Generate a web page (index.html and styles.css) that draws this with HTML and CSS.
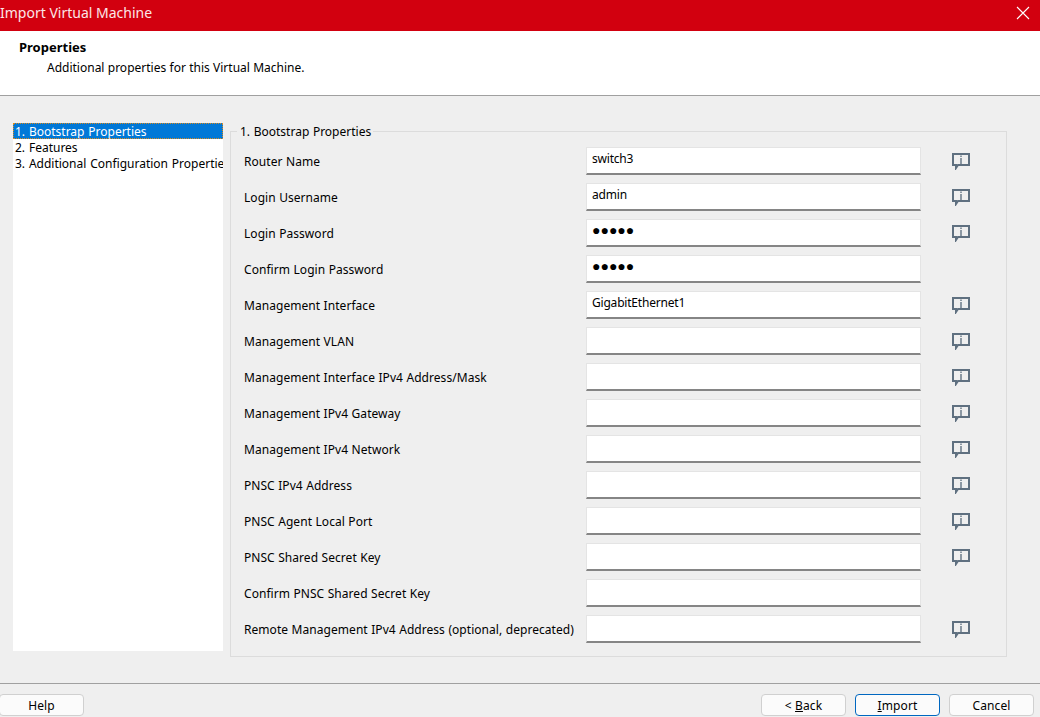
FILE: index.html
```html
<!DOCTYPE html>
<html lang="en">
<head>
<meta charset="utf-8">
<title>Import Virtual Machine</title>
<link rel="stylesheet" href="styles.css">
</head>
<body>
<div class="dialog">
  <header class="titlebar">
    <span class="title">Import Virtual Machine</span>
    <svg class="close" width="14" height="14" viewBox="0 0 14 14"><path d="M1 1L13 13M13 1L1 13" stroke="#fff" stroke-width="1.1" fill="none"/></svg>
  </header>
  <section class="banner">
    <div class="banner-title">Properties</div>
    <div class="banner-sub">Additional properties for this Virtual Machine.</div>
  </section>
  <main class="content">
    <ul class="steps">
      <li class="step selected">1. Bootstrap Properties</li>
      <li class="step">2. Features</li>
      <li class="step">3. Additional Configuration Properties</li>
    </ul>
    <fieldset class="group">
      <legend class="group-title">1. Bootstrap Properties</legend>
      <div class="row"><label class="label">Router Name</label><div class="field">switch3</div><svg class="info" width="18" height="18" viewBox="0 0 18 18"><use href="#bubble"/></svg></div>
      <div class="row"><label class="label">Login Username</label><div class="field">admin</div><svg class="info" width="18" height="18" viewBox="0 0 18 18"><use href="#bubble"/></svg></div>
      <div class="row"><label class="label">Login Password</label><div class="field dots">●●●●●</div><svg class="info" width="18" height="18" viewBox="0 0 18 18"><use href="#bubble"/></svg></div>
      <div class="row"><label class="label">Confirm Login Password</label><div class="field dots">●●●●●</div></div>
      <div class="row"><label class="label">Management Interface</label><div class="field">GigabitEthernet1</div><svg class="info" width="18" height="18" viewBox="0 0 18 18"><use href="#bubble"/></svg></div>
      <div class="row"><label class="label">Management VLAN</label><div class="field"></div><svg class="info" width="18" height="18" viewBox="0 0 18 18"><use href="#bubble"/></svg></div>
      <div class="row"><label class="label">Management Interface IPv4 Address/Mask</label><div class="field"></div><svg class="info" width="18" height="18" viewBox="0 0 18 18"><use href="#bubble"/></svg></div>
      <div class="row"><label class="label">Management IPv4 Gateway</label><div class="field"></div><svg class="info" width="18" height="18" viewBox="0 0 18 18"><use href="#bubble"/></svg></div>
      <div class="row"><label class="label">Management IPv4 Network</label><div class="field"></div><svg class="info" width="18" height="18" viewBox="0 0 18 18"><use href="#bubble"/></svg></div>
      <div class="row"><label class="label">PNSC IPv4 Address</label><div class="field"></div><svg class="info" width="18" height="18" viewBox="0 0 18 18"><use href="#bubble"/></svg></div>
      <div class="row"><label class="label">PNSC Agent Local Port</label><div class="field"></div><svg class="info" width="18" height="18" viewBox="0 0 18 18"><use href="#bubble"/></svg></div>
      <div class="row"><label class="label">PNSC Shared Secret Key</label><div class="field"></div><svg class="info" width="18" height="18" viewBox="0 0 18 18"><use href="#bubble"/></svg></div>
      <div class="row"><label class="label">Confirm PNSC Shared Secret Key</label><div class="field"></div></div>
      <div class="row"><label class="label">Remote Management IPv4 Address (optional, deprecated)</label><div class="field"></div><svg class="info" width="18" height="18" viewBox="0 0 18 18"><use href="#bubble"/></svg></div>
    </fieldset>
  </main>
  <footer class="actions">
    <button class="btn btn-help">Help</button>
    <div class="actions-right">
      <button class="btn">&lt; <u>B</u>ack</button>
      <button class="btn btn-default"><u>I</u>mport</button>
      <button class="btn">Cancel</button>
    </div>
  </footer>
</div>
<svg class="defs" width="0" height="0">
  <defs>
    <g id="bubble">
      <path d="M1 2H17V13H6L4 16V13H1Z" fill="none" stroke="#5f7080" stroke-width="2"/>
      <path d="M8 3.5H10V5H8ZM8 6H10V12H8Z" fill="#8c98a3"/>
    </g>
  </defs>
</svg>
</body>
</html>
```

FILE: styles.css
```css
* { box-sizing: border-box; }
html, body { margin: 0; padding: 0; height: 100%; overflow: hidden; }
body { font: 12px/16px "Noto Sans", "Open Sans", sans-serif; color: #000; background: #efefef; }
.dialog { display: flex; flex-direction: column; height: 717px; width: 1040px; }
.titlebar { height: 31px; flex: none; background: #d2000f; color: #fbe6e7; display: flex; align-items: center; justify-content: space-between; padding: 0 10px 0 0; }
.title { font-size: 14px; margin-top: -6px; }
.close { margin-top: -5px; }
.banner { height: 65px; flex: none; background: #fff; border-bottom: 1px solid #a0a0a0; padding: 8px 0 0 19px; }
.banner-title { font-weight: 700; font-size: 13px; }
.banner-sub { margin: 5px 0 0 28px; word-spacing: .2px; }
.content { flex: 1; display: flex; align-items: flex-start; padding: 27px 33px 0 13px; gap: 7px; }
.steps { list-style: none; margin: 0; padding: 0; width: 210px; height: 528px; background: #fff; overflow: hidden; flex: none; word-spacing: .7px; }
.step { height: 16px; line-height: 18px; padding-left: 2px; white-space: nowrap; overflow: hidden; }
.selected { background: #0078d7; color: #fff; outline: 1px dotted #d98a1f; outline-offset: -1px; }
.group { flex: 1; margin: 0; height: 534px; padding: 8px 0 0 13px; border: 1px solid #dcdcdc; min-width: 0; }
.group-title { padding: 0 2px 0 3px; margin-left: -7px; line-height: 18px; height: 16px; word-spacing: .5px; }
.row { display: flex; align-items: center; height: 28px; margin-bottom: 8px; }
.label { width: 342px; flex: none; white-space: nowrap; line-height: 18px; padding-top: 1px; letter-spacing: .05px; word-spacing: .3px; }
.field { width: 335px; flex: none; height: 28px; background: #fff; border: 1px solid #e4e4e4; border-bottom: 2px solid #858585; padding: 3px 0 0 5px; letter-spacing: -.2px; }
.dots { font-size: 14px; letter-spacing: 0; padding-top: 2px; }
.info { margin-left: 31px; flex: none; }
.actions { height: 34px; flex: none; border-top: 1px solid #a0a0a0; display: flex; justify-content: space-between; padding: 10px 6px 0 0; }
.actions-right { display: flex; gap: 9px; }
.btn { width: 85px; height: 22px; padding: 1px 0 0; background: #fbfbfb; border: 1px solid #d0d0d0; border-radius: 4px; font: inherit; letter-spacing: .1px; color: #000; }
.btn-help { margin-left: -1px; }
.btn-default { border-color: #0067c0; }
.defs { position: absolute; }
```
